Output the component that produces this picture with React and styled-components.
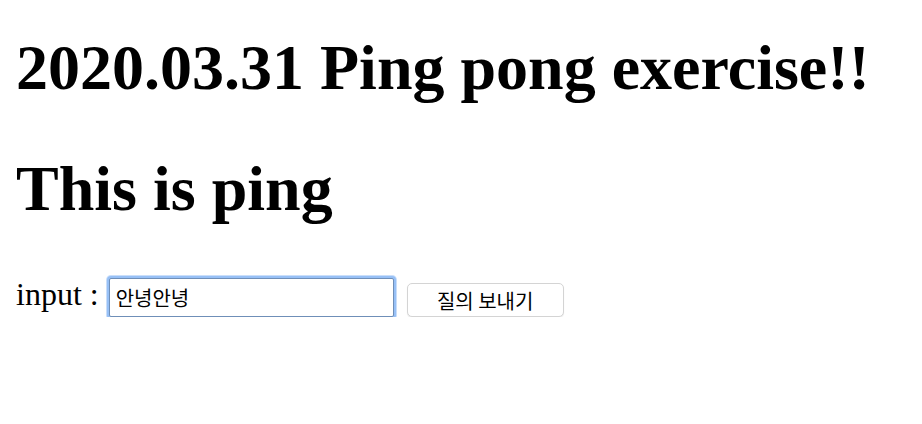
import React from "react";
import styled, { createGlobalStyle } from "styled-components";

const Global = createGlobalStyle`
  html, body { margin: 0; padding: 0; background: #fff; }
  body { font-family: "Liberation Serif", "Times New Roman", serif; color: #000; }
`;

const Page = styled.main`
  display: flex;
  flex-direction: column;
  align-items: flex-start;
  padding: 31px 16px 0 16px;
`;

const Heading = styled.h1`
  margin: 0 0 ${(p) => p.$gap}px 0;
  font-family: "Liberation Serif", "Times New Roman", serif;
  font-weight: 700;
  font-size: 64px;
  line-height: 74px;
  white-space: nowrap;
`;

const Row = styled.form`
  display: flex;
  align-items: flex-start;
`;

const Label = styled.label`
  font-size: 32px;
  line-height: 33px;
  margin-right: 10px;
`;

const TextInput = styled.input`
  box-sizing: border-box;
  width: 285px;
  height: 39px;
  margin: 0;
  padding: 0 6px;
  border: 1px solid #6f8fb8;
  border-radius: 2px;
  box-shadow: 0 0 0 2px #97c0f6, 0 0 0 3px #c9defa;
  outline: none;
  font-family: "Noto Sans CJK KR", "Noto Sans", sans-serif;
  font-size: 20px;
  color: #000;
  background: #fff;
`;

const Button = styled.button`
  box-sizing: border-box;
  width: 157px;
  height: 34px;
  margin: 5px 0 0 13px;
  padding: 0;
  border: 1px solid #d4d4d4;
  border-radius: 5px;
  background: #fff;
  box-shadow: 0 1px 1px rgba(0, 0, 0, 0.08);
  font-family: "Noto Sans CJK KR", "Noto Sans", sans-serif;
  font-size: 20px;
  color: #000;
  cursor: pointer;
`;

export default function App() {
  return (
    <>
      <Global />
      <Page>
        <Heading $gap={47}>2020.03.31 Ping pong exercise!!</Heading>
        <Heading $gap={52}>This is ping</Heading>
        <Row onSubmit={(e) => e.preventDefault()}>
          <Label htmlFor="q">input :</Label>
          <TextInput id="q" defaultValue="안녕안녕" />
          <Button type="submit">질의 보내기</Button>
        </Row>
      </Page>
    </>
  );
}
